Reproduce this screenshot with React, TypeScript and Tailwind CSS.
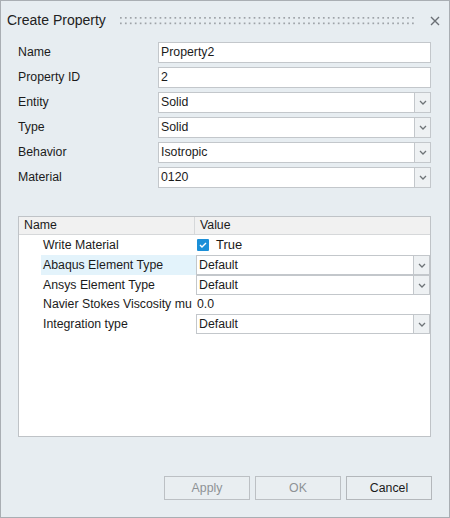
import React from "react"

const fields = [
  { label: "Name", value: "Property2", select: false },
  { label: "Property ID", value: "2", select: false },
  { label: "Entity", value: "Solid", select: true },
  { label: "Type", value: "Solid", select: true },
  { label: "Behavior", value: "Isotropic", select: true },
  { label: "Material", value: "0120", select: true },
]

function Chevron() {
  return (
    <svg width="8" height="5" viewBox="0 0 8 5" fill="none">
      <path d="M1 1 L4 4 L7 1" stroke="#6f7478" strokeWidth="1.3" />
    </svg>
  )
}

function Select({ value, h = "h-[21px]" }: { value: string; h?: string }) {
  return (
    <div className={`flex ${h}`}>
      <div className="flex-1 flex items-center bg-white border border-[#c3c7cb] pl-[2px]">{value}</div>
      <div className="w-[16px] flex items-center justify-center bg-[#eef1f3] border border-l-0 border-[#c3c7cb]">
        <Chevron />
      </div>
    </div>
  )
}

function Input({ value }: { value: string }) {
  return (
    <div className="h-[21px] flex items-center bg-white border border-[#c3c7cb] pl-[2px]">{value}</div>
  )
}

function Grip() {
  const dots = []
  for (let i = 0; i < 60; i++) {
    dots.push(<rect key={"a" + i} x={i * 4.95} y={0} width={1.7} height={1.7} fill="#9ea3a8" />)
    dots.push(<rect key={"b" + i} x={i * 4.95} y={5.5} width={1.7} height={1.7} fill="#9ea3a8" />)
  }
  return (
    <svg width="296" height="8" viewBox="0 0 296 8">
      {dots}
    </svg>
  )
}

export default function App() {
  return (
    <div className="w-[450px] h-[518px] bg-[#e7edf1] border border-[#a9aeb3] flex flex-col font-['Liberation_Sans',Arial,sans-serif] text-[12.3px] text-[#1b1b1b]">
      {/* title bar */}
      <div className="h-[39px] flex items-center pl-[6px] pr-[9px] shrink-0">
        <span className="text-[14px] text-[#222] w-[113px]">Create Property</span>
        <Grip />
        <div className="flex-1" />
        <svg width="10" height="10" viewBox="0 0 10 10">
          <path d="M1 1 L9 9 M9 1 L1 9" stroke="#6b7075" strokeWidth="1.4" />
        </svg>
      </div>

      {/* fields */}
      <div className="pt-[2px] pl-[17px] pr-[18px] flex flex-col gap-[4px]">
        {fields.map((f) => (
          <div key={f.label} className="grid grid-cols-[140px_1fr] items-center">
            <span>{f.label}</span>
            {f.select ? <Select value={f.value} /> : <Input value={f.value} />}
          </div>
        ))}
      </div>

      {/* property table */}
      <div className="mt-[28px] ml-[17px] mr-[18px] h-[221px] bg-white border border-[#bfc3c7] flex flex-col">
        <div className="h-[18px] flex bg-[#f1f1f1] border-b border-[#d6d8da]">
          <div className="w-[176px] pl-[5px] flex items-center border-r border-[#d6d8da]">Name</div>
          <div className="flex-1 pl-[5px] flex items-center">Value</div>
        </div>
        <div className="flex h-[20px]">
          <div className="w-[177px] pl-[24px] flex items-center">Write Material</div>
          <div className="flex-1 flex items-center pl-[1px] gap-[7px]">
            <div className="w-[12px] h-[12px] bg-[#1b8fd8] rounded-[1px] flex items-center justify-center">
              <svg width="8" height="6" viewBox="0 0 8 6" fill="none">
                <path d="M1 3 L3 5 L7 1" stroke="white" strokeWidth="1.4" />
              </svg>
            </div>
            <span className="text-[13px]">True</span>
          </div>
        </div>
        <div className="flex h-[20px]">
          <div className="w-[177px] pl-[22px] flex">
            <div className="flex-1 bg-[#e3f3fb] pl-[2px] flex items-center">Abaqus Element Type</div>
          </div>
          <div className="flex-1">
            <Select value="Default" h="h-[20px]" />
          </div>
        </div>
        <div className="flex h-[20px]">
          <div className="w-[177px] pl-[24px] flex items-center">Ansys Element Type</div>
          <div className="flex-1">
            <Select value="Default" h="h-[20px]" />
          </div>
        </div>
        <div className="flex h-[19px]">
          <div className="w-[177px] pl-[24px] flex items-center whitespace-nowrap">Navier Stokes Viscosity mu</div>
          <div className="flex-1 flex items-center pl-[1px]">0.0</div>
        </div>
        <div className="flex h-[20px]">
          <div className="w-[177px] pl-[24px] flex items-center">Integration type</div>
          <div className="flex-1">
            <Select value="Default" h="h-[20px]" />
          </div>
        </div>
      </div>

      {/* buttons */}
      <div className="mt-[39px] pr-[17px] flex justify-end gap-[5px]">
        <button className="w-[86px] h-[24px] border border-[#bcc0c4] bg-[#e9eef1] text-[#8e9296] text-[12.3px]">Apply</button>
        <button className="w-[86px] h-[24px] border border-[#bcc0c4] bg-[#e9eef1] text-[#8e9296] text-[12.3px]">OK</button>
        <button className="w-[86px] h-[24px] border border-[#b3b7bb] bg-[#e9eef1] text-[#1b1b1b] text-[12.3px]">Cancel</button>
      </div>
    </div>
  )
}
